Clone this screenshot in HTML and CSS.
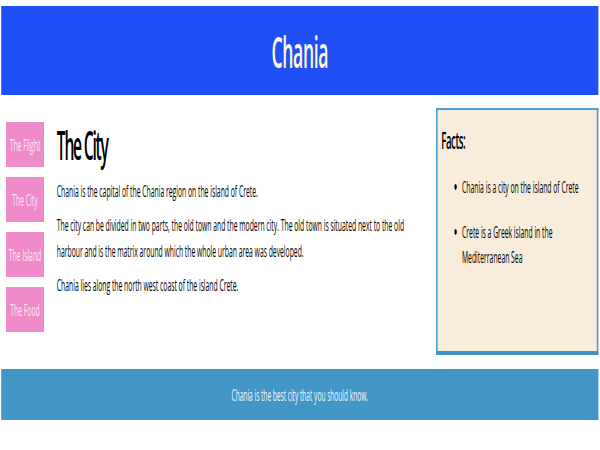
FILE: index.html
```html
<!DOCTYPE html>
<html lang="en">
<head>
<meta charset="utf-8">
<title>Chania</title>
<link rel="stylesheet" href="styles.css">
</head>
<body>
<div class="frame">
<div class="page">
  <header class="header">
    <h1 class="title">Chania</h1>
  </header>
  <div class="row">
    <nav class="menu">
      <div class="menu-item">The Flight</div>
      <div class="menu-item">The City</div>
      <div class="menu-item">The Island</div>
      <div class="menu-item">The Food</div>
    </nav>
    <main class="content">
      <h2 class="content-title">The City</h2>
      <p class="text">Chania is the capital of the Chania region on the island of Crete.</p>
      <p class="text">The city can be divided in two parts, the old town and the modern city. The old town is situated next to the old harbour and is the matrix around which the whole urban area was developed.</p>
      <p class="text">Chania lies along the north west coast of the island Crete.</p>
    </main>
    <aside class="facts">
      <h2 class="facts-title">Facts:</h2>
      <ul class="facts-list">
        <li>Chania is a city on the island of Crete</li>
        <li>Crete is a Greek island in the Mediterranean Sea</li>
      </ul>
    </aside>
  </div>
  <footer class="footer">
    <p class="footer-text">Chania is the best city that you should know.</p>
  </footer>
</div>
</div>
</body>
</html>
```
FILE: styles.css
```css
html, body {
  margin: 0;
  padding: 0;
  overflow: hidden;
  background: #ffffff;
}

.frame {
  width: 600px;
  height: 450px;
  overflow: hidden;
}

.page {
  width: 1499px;
  box-sizing: border-box;
  padding: 6px 3px 0 3px;
  transform: scaleX(0.4);
  transform-origin: 0 0;
  font-family: "Open Sans", "DejaVu Sans", sans-serif;
  font-weight: 500;
  color: #000;
}

.header {
  height: 89px;
  background: #214ff7;
  display: flex;
  align-items: center;
  justify-content: center;
}

.title {
  margin: 0;
  color: #fcf7d6;
  font-size: 44px;
  font-weight: 600;
  letter-spacing: -1px;
  line-height: 1;
}

.row {
  display: flex;
  align-items: flex-start;
  margin-top: 13px;
}

.menu {
  width: 95px;
  flex: none;
  margin-left: 12px;
  margin-top: 14px;
  display: flex;
  flex-direction: column;
  gap: 10px;
}

.menu-item {
  height: 45px;
  background: #ef8acb;
  color: #fde9f4;
  font-size: 17px;
  display: flex;
  align-items: center;
  justify-content: center;
}

.content {
  flex: 1;
  margin-left: 32px;
  padding-right: 45px;
  margin-top: 16px;
}

.content-title {
  margin: 0 0 11px 0;
  font-size: 39px;
  font-weight: 600;
  letter-spacing: -3px;
  line-height: 1.1;
}

.text {
  margin: 0 0 8px 0;
  font-size: 17px;
  line-height: 26px;
}

.facts {
  width: 406px;
  flex: none;
  height: 247px;
  box-sizing: border-box;
  background: #f8ecdb;
  border-style: solid;
  border-color: #4a9fd5;
  border-width: 2px 4px 2px 4px;
  border-bottom: 4px solid #3f93c8;
  padding: 17px 9px;
}

.facts-title {
  margin: 0 0 21px 0;
  font-size: 24px;
  font-weight: 600;
  letter-spacing: -1px;
  line-height: 1.1;
}

.facts-list {
  margin: 0;
  padding-left: 52px;
  font-size: 17px;
  line-height: 25px;
}

.facts-list li {
  margin-bottom: 20px;
}

.footer {
  margin-top: 14px;
  height: 51px;
  background: #4397c7;
  display: flex;
  align-items: center;
  justify-content: center;
}

.footer-text {
  margin: 0;
  color: #eef6fc;
  font-size: 16.5px;
}
```
